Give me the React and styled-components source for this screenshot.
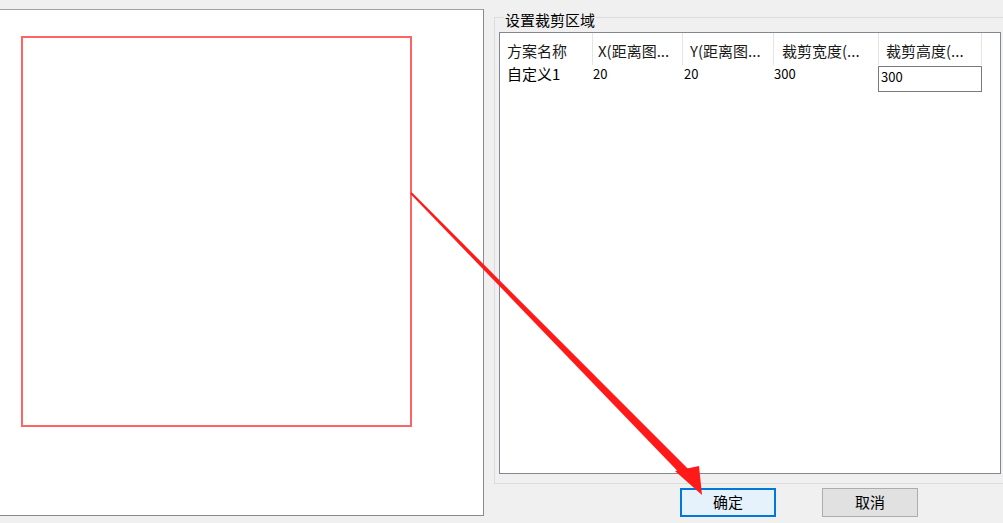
import React from 'react';
import styled, { createGlobalStyle } from 'styled-components';

const GlobalStyle = createGlobalStyle`
  html, body {
    margin: 0;
    padding: 0;
    background: #f0f0f0;
  }
  body {
    font-family: "Noto Sans CJK SC", "Noto Sans", sans-serif;
    overflow: hidden;
  }
`;

const Window = styled.div`
  position: relative;
  display: flex;
  align-items: flex-start;
  width: 1003px;
  height: 523px;
  overflow: hidden;
  background: #f0f0f0;
  color: #000;
  font-size: 15px;
`;

const Canvas = styled.div`
  flex: none;
  box-sizing: border-box;
  width: 485px;
  height: 507px;
  margin: 9px 0 0 -1px;
  padding: 26px 0 0 21px;
  background: #fff;
  border: 1px solid #a0a0a0;
  border-right-color: #8a8a8a;
  border-bottom-color: #8a8a8a;
`;

const CropRect = styled.div`
  box-sizing: border-box;
  width: 391px;
  height: 391px;
  border: 2px solid #ff6464;
`;

const Side = styled.div`
  flex: none;
  display: flex;
  flex-direction: column;
  margin-left: 10px;
  width: 512px;
`;

const Group = styled.fieldset`
  box-sizing: border-box;
  width: 512px;
  margin: 4px 0 0;
  padding: 2px 4px 9px;
  border: 1px solid #dcdcdc;
  min-width: 0;
`;

const GroupTitle = styled.legend`
  margin-left: 5px;
  padding: 6px 1px 0;
  line-height: 20px;
  font-size: 15px;
  color: #000;
`;

const List = styled.div`
  box-sizing: border-box;
  width: 502px;
  height: 442px;
  background: #fff;
  border: 1px solid #828790;
  display: grid;
  grid-template-columns: 93px 90px 91px 105px 103px;
  grid-template-rows: 32px 26px;
  align-content: start;
`;

const HeadCell = styled.div`
  box-sizing: border-box;
  display: flex;
  align-items: center;
  padding: 3px 0 0 ${p => p.$indent}px;
  border-right: 1px solid #e5e5e5;
  white-space: nowrap;
  overflow: hidden;
  font-size: 15px;
  color: #1a1a1a;
`;

const Cell = styled.div`
  box-sizing: border-box;
  display: flex;
  align-items: center;
  padding: 0 0 9px ${p => p.$indent}px;
  white-space: nowrap;
  font-size: ${p => (p.$num ? 13 : 15)}px;
`;

const EditCell = styled.div`
  margin-left: -1px;
`;

const Edit = styled.input`
  box-sizing: border-box;
  width: 104px;
  height: 26px;
  margin: 0;
  padding: 0 2px 4px;
  border: 1px solid #7a7a7a;
  background: #fff;
  font-family: "Noto Sans CJK SC", "Noto Sans", sans-serif;
  font-size: 13px;
  color: #000;
  outline: none;
`;

const ButtonRow = styled.div`
  display: flex;
  gap: 46px;
  margin-top: 4px;
  padding-left: 186px;
`;

const Button = styled.button`
  box-sizing: border-box;
  width: 96px;
  height: 29px;
  margin: 0;
  padding: 0 0 2px;
  font-family: "Noto Sans CJK SC", sans-serif;
  font-size: 15px;
  color: #000;
  background: ${p => (p.$primary ? '#e5f1fb' : '#e1e1e1')};
  border: 1px solid ${p => (p.$primary ? '#0078d7' : '#adadad')};
  box-shadow: ${p => (p.$primary ? 'inset 0 0 0 1px #0078d7' : 'none')};
`;

const Overlay = styled.svg`
  position: absolute;
  left: 0;
  top: 0;
  pointer-events: none;
`;

const headers = [
  { label: '方案名称', indent: 7 },
  { label: 'X(距离图...', indent: 5 },
  { label: 'Y(距离图...', indent: 7 },
  { label: '裁剪宽度(...', indent: 8 },
  { label: '裁剪高度(...', indent: 7 },
];

const row = { name: '自定义1', x: '20', y: '20', width: '300', height: '300' };

// hand-drawn annotation arrow, tapering from the crop box to the OK button
function Arrow() {
  return (
    <Overlay width="1003" height="523" viewBox="0 0 1003 523">
      <polygon
        points="411.7,192.3 693.7,474.6 687.2,480.9 410.3,193.7"
        fill="#ff1a1a"
      />
      <polygon points="675,471 699,466 702,495" fill="#ff1a1a" />
    </Overlay>
  );
}

export default function App() {
  return (
    <Window>
      <GlobalStyle />
      <Canvas>
        <CropRect />
      </Canvas>
      <Side>
        <Group>
          <GroupTitle>设置裁剪区域</GroupTitle>
          <List>
            {headers.map(h => (
              <HeadCell key={h.label} $indent={h.indent}>{h.label}</HeadCell>
            ))}
            <Cell $indent={7}>{row.name}</Cell>
            <Cell $indent={0} $num>{row.x}</Cell>
            <Cell $indent={1} $num>{row.y}</Cell>
            <Cell $indent={0} $num>{row.width}</Cell>
            <EditCell>
              <Edit defaultValue={row.height} />
            </EditCell>
          </List>
        </Group>
        <ButtonRow>
          <Button $primary>确定</Button>
          <Button>取消</Button>
        </ButtonRow>
      </Side>
      <Arrow />
    </Window>
  );
}
